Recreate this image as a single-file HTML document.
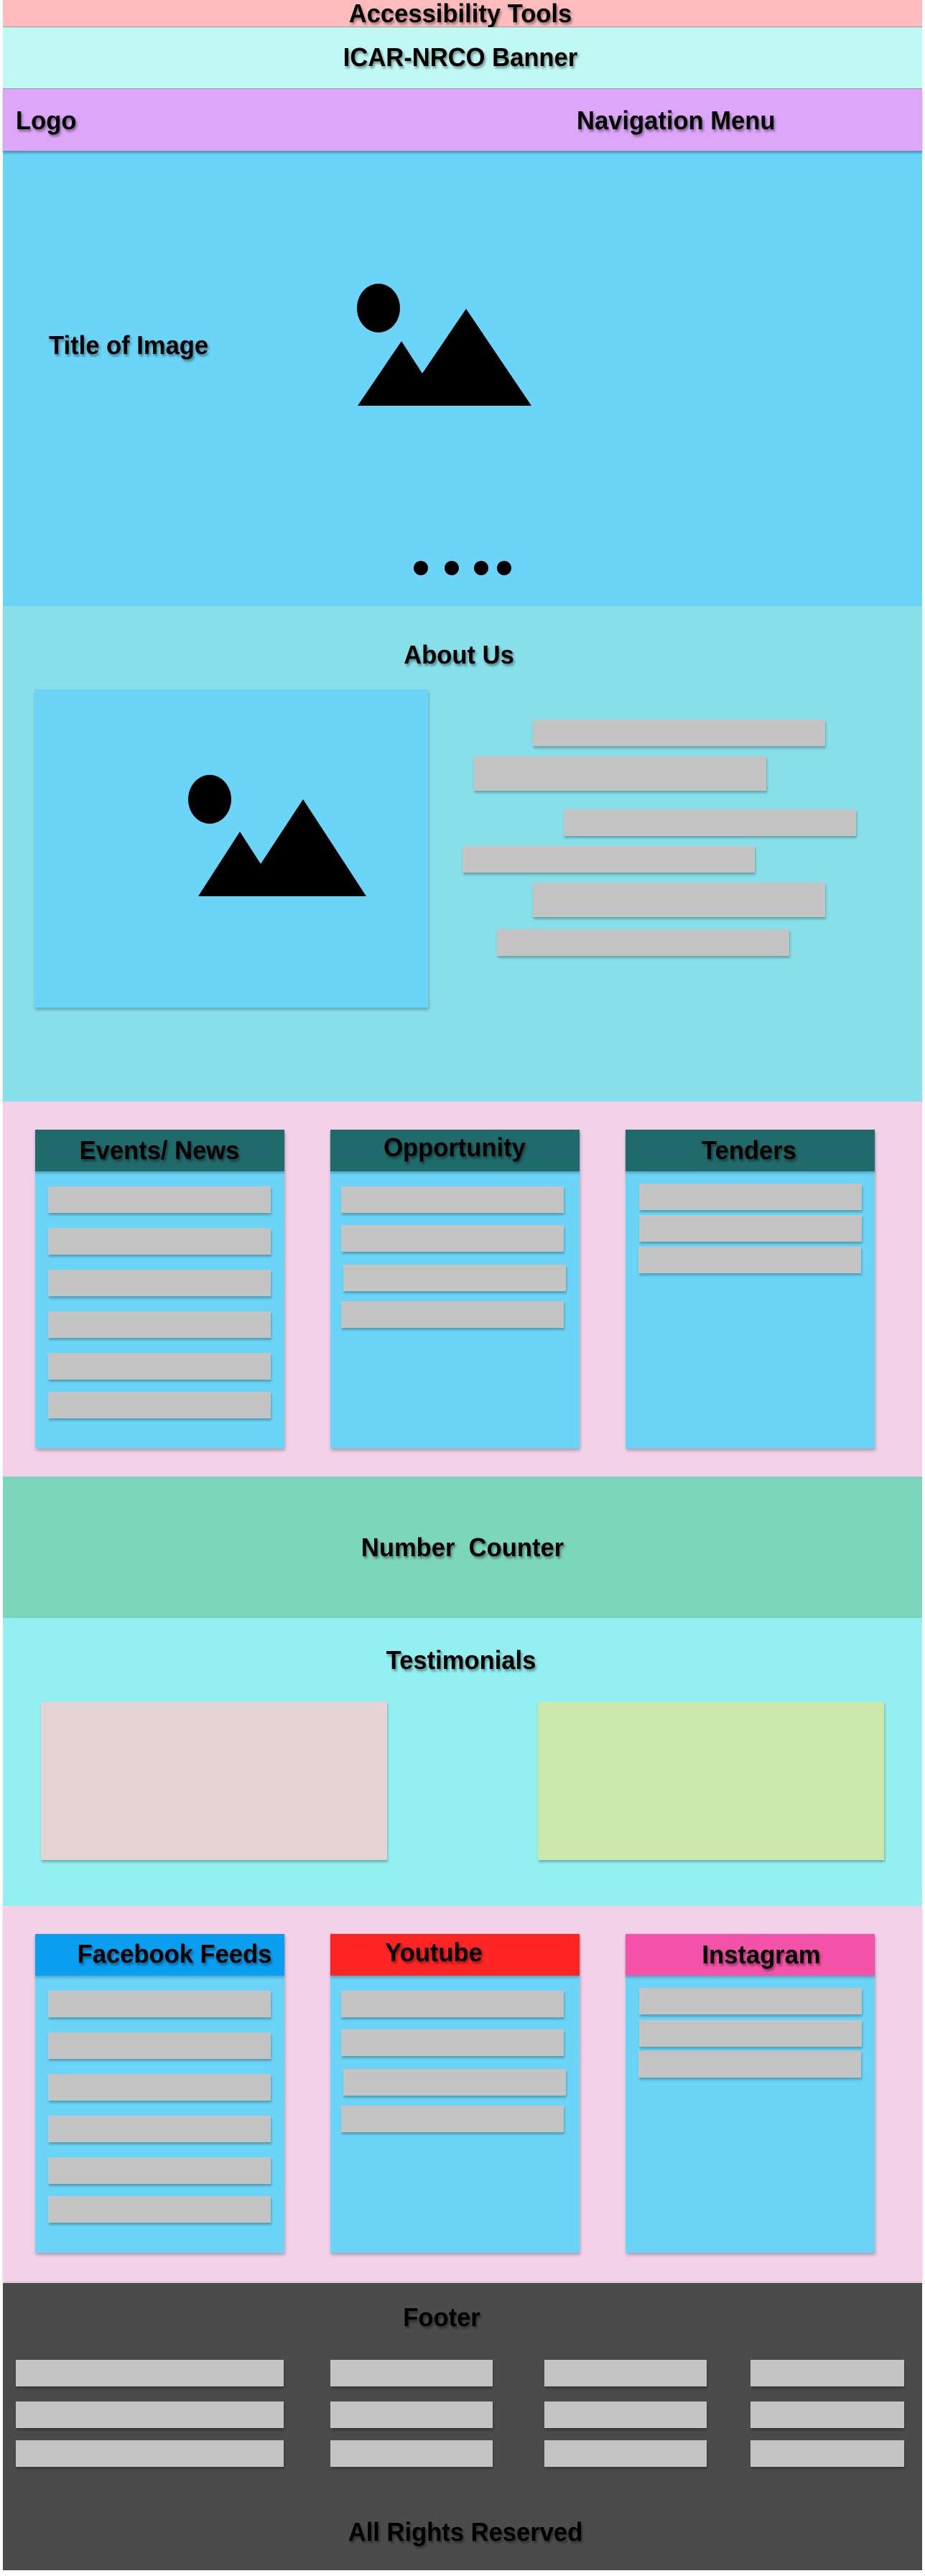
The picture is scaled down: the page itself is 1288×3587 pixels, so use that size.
<!DOCTYPE html>
<html><head><meta charset="utf-8"><style>
*{margin:0;padding:0;box-sizing:border-box}
body{width:1288px;height:3587px;background:#fff;position:relative;overflow:hidden;font-family:"Liberation Sans",sans-serif}
.s{position:absolute;left:4px;width:1280px}
.a{position:absolute}
.t{position:absolute;font-weight:bold;font-size:36px;color:#000;white-space:nowrap;text-shadow:2px 3px 3px rgba(0,0,0,.4);transform:translate(-50%,-50%) scaleX(.96);line-height:1}
.tl{position:absolute;font-weight:bold;font-size:36px;color:#000;white-space:nowrap;text-shadow:2px 3px 3px rgba(0,0,0,.4);transform:translateY(-50%) scaleX(.96);transform-origin:left center;line-height:1}
.b{position:absolute;background:#c4c4c4;box-shadow:1px 3px 3px rgba(0,0,0,.25)}
.card{position:absolute;background:#6ad5f7;box-shadow:1px 3px 4px rgba(0,0,0,.25)}
.hd{position:absolute;left:0;right:0;top:0;height:58px;box-shadow:0 3px 3px rgba(0,0,0,.2)}
</style></head><body>
<div class="s" style="top:0;height:38px;background:#ffbcbc;border-bottom:1px solid #999"></div>
<div class="t" style="left:641px;top:19px">Accessibility Tools</div>
<div class="s" style="top:38px;height:86px;background:#c0f8f3;border-bottom:1px solid #999"></div>
<div class="t" style="left:641px;top:80px">ICAR-NRCO Banner</div>
<div class="s" style="top:124px;height:86px;background:#dea6f9;box-shadow:0 3px 3px rgba(0,0,0,.3)"></div>
<div class="tl" style="left:22px;top:168px">Logo</div>
<div class="tl" style="left:803px;top:168px">Navigation Menu</div>

<div class="s" style="top:210px;height:634px;background:#6ad5f7;z-index:-1"></div>
<div class="tl" style="left:68px;top:481px">Title of Image</div>
<svg class="a" style="left:0;top:0" width="1288" height="1400">
<ellipse cx="527" cy="429" rx="30" ry="34"/>
<polygon points="498,565 559,475 588,520 649,430 740,565"/>
<ellipse cx="586" cy="791" rx="10" ry="10"/><ellipse cx="629" cy="791" rx="10" ry="10"/><ellipse cx="670" cy="791" rx="10" ry="10"/><ellipse cx="702" cy="791" rx="10" ry="10"/>
</svg>

<div class="s" style="top:844px;height:690px;background:#87dfea;z-index:-1;box-shadow:0 3px 3px rgba(0,0,0,.2)"></div>
<div class="t" style="left:639px;top:912px">About Us</div>
<div class="card" style="left:48px;top:960px;width:548px;height:443px"></div>
<svg class="a" style="left:0;top:1000px" width="700" height="300">
<ellipse cx="292" cy="113" rx="30" ry="34"/>
<polygon points="276,248 334,158 363,203 422,113 510,248"/>
</svg>
<div class="b" style="left:742px;top:1002px;width:407px;height:37px"></div>
<div class="b" style="left:660px;top:1053px;width:407px;height:48px"></div>
<div class="b" style="left:785px;top:1127px;width:407px;height:37px"></div>
<div class="b" style="left:644px;top:1178px;width:407px;height:37px"></div>
<div class="b" style="left:742px;top:1229px;width:407px;height:48px"></div>
<div class="b" style="left:692px;top:1294px;width:407px;height:37px"></div>

<div class="s" style="top:1534px;height:522px;background:#f3d1e9;z-index:-1"></div>
<div class="card" style="left:49px;top:1573px;width:347px;height:444px"><div class="hd" style="background:#1f6b6b"></div></div>
<div class="card" style="left:460px;top:1573px;width:347px;height:444px"><div class="hd" style="background:#1f6b6b"></div></div>
<div class="card" style="left:871px;top:1573px;width:347px;height:444px"><div class="hd" style="background:#1f6b6b"></div></div>
<div class="t" style="left:222px;top:1602px">Events/ News</div>
<div class="t" style="left:633px;top:1598px">Opportunity</div>
<div class="t" style="left:1043px;top:1602px">Tenders</div>
<div class="b" style="left:67px;top:1652px;width:310px;height:37px"></div>
<div class="b" style="left:67px;top:1710px;width:310px;height:37px"></div>
<div class="b" style="left:67px;top:1768px;width:310px;height:37px"></div>
<div class="b" style="left:67px;top:1826px;width:310px;height:37px"></div>
<div class="b" style="left:67px;top:1884px;width:310px;height:37px"></div>
<div class="b" style="left:67px;top:1938px;width:310px;height:37px"></div>
<div class="b" style="left:475px;top:1652px;width:310px;height:37px"></div>
<div class="b" style="left:475px;top:1706px;width:310px;height:37px"></div>
<div class="b" style="left:478px;top:1761px;width:310px;height:37px"></div>
<div class="b" style="left:475px;top:1812px;width:310px;height:37px"></div>
<div class="b" style="left:890px;top:1648px;width:310px;height:37px"></div>
<div class="b" style="left:890px;top:1692px;width:310px;height:37px"></div>
<div class="b" style="left:889px;top:1736px;width:310px;height:37px"></div>

<div class="s" style="top:2056px;height:197px;background:#7bd6bb"></div>
<div class="t" style="left:644px;top:2155px">Number&nbsp; Counter</div>

<div class="s" style="top:2253px;height:401px;background:#93f0f0"></div>
<div class="t" style="left:642px;top:2312px">Testimonials</div>
<div class="b" style="left:57px;top:2370px;width:482px;height:220px;background:#e6d4d4"></div>
<div class="b" style="left:749px;top:2370px;width:482px;height:220px;background:#cde8ab"></div>

<div class="s" style="top:2654px;height:523px;background:#f3d1e9;z-index:-1;box-shadow:0 3px 3px rgba(0,0,0,.2)"></div>
<div class="card" style="left:49px;top:2693px;width:347px;height:444px"><div class="hd" style="background:#0a9ef0"></div></div>
<div class="card" style="left:460px;top:2693px;width:347px;height:444px"><div class="hd" style="background:#ff2424"></div></div>
<div class="card" style="left:871px;top:2693px;width:347px;height:444px"><div class="hd" style="background:#f452a8"></div></div>
<div class="t" style="left:243px;top:2721px">Facebook Feeds</div>
<div class="t" style="left:604px;top:2719px">Youtube</div>
<div class="t" style="left:1060px;top:2722px">Instagram</div>
<div class="b" style="left:67px;top:2772px;width:310px;height:37px"></div>
<div class="b" style="left:67px;top:2830px;width:310px;height:37px"></div>
<div class="b" style="left:67px;top:2888px;width:310px;height:37px"></div>
<div class="b" style="left:67px;top:2946px;width:310px;height:37px"></div>
<div class="b" style="left:67px;top:3004px;width:310px;height:37px"></div>
<div class="b" style="left:67px;top:3058px;width:310px;height:37px"></div>
<div class="b" style="left:475px;top:2772px;width:310px;height:37px"></div>
<div class="b" style="left:475px;top:2826px;width:310px;height:37px"></div>
<div class="b" style="left:478px;top:2881px;width:310px;height:37px"></div>
<div class="b" style="left:475px;top:2932px;width:310px;height:37px"></div>
<div class="b" style="left:890px;top:2768px;width:310px;height:37px"></div>
<div class="b" style="left:890px;top:2813px;width:310px;height:37px"></div>
<div class="b" style="left:889px;top:2856px;width:310px;height:37px"></div>

<div class="s" style="top:3179px;height:400px;background:#4b4b4b"></div>
<div class="t" style="left:615px;top:3227px">Footer</div>
<div class="b" style="left:22px;top:3286px;width:373px;height:37px"></div>
<div class="b" style="left:460px;top:3286px;width:226px;height:37px"></div>
<div class="b" style="left:758px;top:3286px;width:226px;height:37px"></div>
<div class="b" style="left:1045px;top:3286px;width:214px;height:37px"></div>
<div class="b" style="left:22px;top:3344px;width:373px;height:37px"></div>
<div class="b" style="left:460px;top:3344px;width:226px;height:37px"></div>
<div class="b" style="left:758px;top:3344px;width:226px;height:37px"></div>
<div class="b" style="left:1045px;top:3344px;width:214px;height:37px"></div>
<div class="b" style="left:22px;top:3398px;width:373px;height:37px"></div>
<div class="b" style="left:460px;top:3398px;width:226px;height:37px"></div>
<div class="b" style="left:758px;top:3398px;width:226px;height:37px"></div>
<div class="b" style="left:1045px;top:3398px;width:214px;height:37px"></div>
<div class="t" style="left:648px;top:3526px">All Rights Reserved</div>
</body></html>
